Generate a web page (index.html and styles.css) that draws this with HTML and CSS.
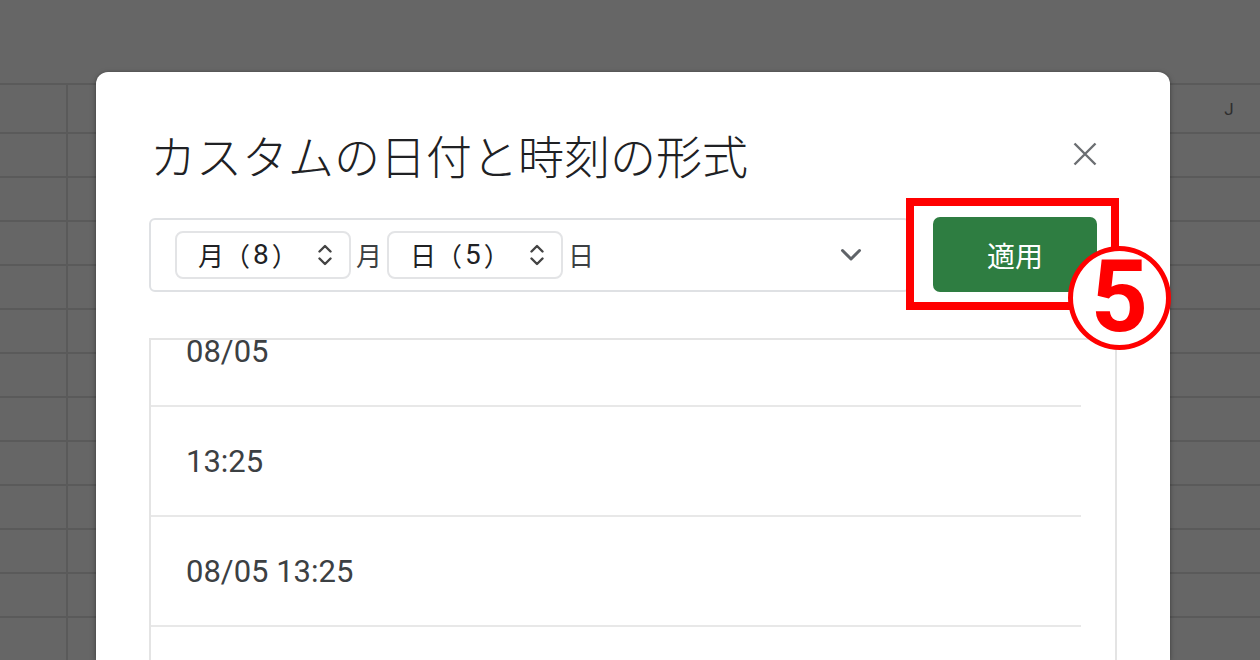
FILE: index.html
```html
<!DOCTYPE html>
<html lang="ja">
<head>
<meta charset="utf-8">
<title>カスタムの日付と時刻の形式</title>
<link rel="stylesheet" href="styles.css">
</head>
<body>
<div class="sheet">
  <div class="toolbar"></div>
  <div class="colhead">
    <div class="rownum"></div>
    <div class="cells"></div>
    <div class="colj">J</div>
  </div>
  <div class="row"><div class="rownum"></div><div class="cells"></div></div>
  <div class="row"><div class="rownum"></div><div class="cells"></div></div>
  <div class="row"><div class="rownum"></div><div class="cells"></div></div>
  <div class="row"><div class="rownum"></div><div class="cells"></div></div>
  <div class="row"><div class="rownum"></div><div class="cells"></div></div>
  <div class="row"><div class="rownum"></div><div class="cells"></div></div>
  <div class="row"><div class="rownum"></div><div class="cells"></div></div>
  <div class="row"><div class="rownum"></div><div class="cells"></div></div>
  <div class="row"><div class="rownum"></div><div class="cells"></div></div>
  <div class="row"><div class="rownum"></div><div class="cells"></div></div>
  <div class="row"><div class="rownum"></div><div class="cells"></div></div>
  <div class="row row-last"><div class="rownum"></div><div class="cells"></div></div>
</div>

<div class="dialog">
  <div class="dlg-head">
    <h1 class="title">カスタムの日付と時刻の形式</h1>
    <button class="close" aria-label="閉じる">
      <svg width="24" height="24" viewBox="0 0 24 24"><path d="M1.5 1.5 L22.5 22.5 M22.5 1.5 L1.5 22.5" stroke="#6b6e72" stroke-width="2.4" fill="none"/></svg>
    </button>
  </div>
  <div class="fmt-row">
    <div class="fmt-input">
      <div class="chip"><span class="chip-label">月（<span class="num">8</span>）</span>
        <svg width="16" height="26" viewBox="0 0 16 26"><path d="M2.5 9.5 L8 4 L13.5 9.5 M2.5 16.5 L8 22 L13.5 16.5" stroke="#444" stroke-width="2.4" fill="none" stroke-linecap="round" stroke-linejoin="round"/></svg>
      </div>
      <span class="lit">月</span>
      <div class="chip"><span class="chip-label">日（<span class="num">5</span>）</span>
        <svg width="16" height="26" viewBox="0 0 16 26"><path d="M2.5 9.5 L8 4 L13.5 9.5 M2.5 16.5 L8 22 L13.5 16.5" stroke="#444" stroke-width="2.4" fill="none" stroke-linecap="round" stroke-linejoin="round"/></svg>
      </div>
      <span class="lit">日</span>
      <div class="spacer"></div>
      <svg class="dd" width="22" height="14" viewBox="0 0 22 14"><path d="M2.5 2.5 L11 11 L19.5 2.5" stroke="#5f6368" stroke-width="3" fill="none" stroke-linecap="round" stroke-linejoin="round"/></svg>
    </div>
    <button class="apply">適用</button>
  </div>
  <div class="list">
    <div class="item item-first">08/05</div>
    <div class="item">13:25</div>
    <div class="item">08/05 13:25</div>
    <div class="item item-last"></div>
  </div>
</div>

<div class="annot-box"></div>
<div class="annot-num">5</div>
</body>
</html>
```

FILE: styles.css
```css
* { box-sizing: border-box; }
html, body { margin: 0; padding: 0; }
body {
  width: 1260px;
  height: 660px;
  overflow: hidden;
  background: #666666;
  position: relative;
  font-family: "Roboto", "Noto Sans CJK JP", sans-serif;
}

/* background spreadsheet */
.sheet { display: flex; flex-direction: column; height: 660px; }
.toolbar { height: 83px; flex-shrink: 0; }
.colhead {
  display: flex;
  flex-shrink: 0;
  height: 51px;
  border-top: 2px solid #5a5a5a;
  border-bottom: 2px solid #5a5a5a;
}
.row {
  display: flex;
  flex-shrink: 0;
  height: 44px;
  border-bottom: 2px solid #5a5a5a;
}
.row-last {
  flex: 1;
  height: auto;
  border-bottom: 0;
}
.rownum { width: 68px; border-right: 2px solid #5a5a5a; }
.cells { flex: 1; }
.colj {
  width: 62px;
  display: flex;
  align-items: center;
  justify-content: center;
  color: #2e2e2e;
  font-size: 17px;
}

/* dialog */
.dialog {
  position: absolute;
  left: 96px;
  top: 72px;
  width: 1074px;
  height: 588px;
  background: #ffffff;
  border-radius: 12px 12px 0 0;
  box-shadow: 0 2px 6px rgba(0,0,0,0.25), 0 0 3px rgba(0,0,0,0.2);
  padding: 50px 53px 0 53px;
  display: flex;
  flex-direction: column;
}
.dlg-head {
  flex-shrink: 0;
  height: 64px;
  display: flex;
  align-items: center;
  justify-content: space-between;
  padding-right: 20px;
}
.title {
  margin: 0;
  font-family: "Noto Sans CJK JP", sans-serif;
  font-weight: 300;
  font-size: 46px;
  line-height: 1;
  color: #202124;
  padding-left: 1px;
}
.close {
  border: 0;
  background: none;
  padding: 0;
  width: 24px;
  height: 24px;
  display: flex;
}

.fmt-row {
  flex-shrink: 0;
  margin-top: 31px;
  display: flex;
  align-items: center;
  padding-right: 20px;
}
.fmt-input {
  width: 761px;
  height: 74px;
  border: 2px solid #dfe1e4;
  border-radius: 6px;
  display: flex;
  align-items: center;
  padding-left: 24px;
  padding-right: 46px;
}
.chip {
  width: 176px;
  height: 48px;
  border: 2px solid #e3e4e6;
  border-radius: 8px;
  display: flex;
  align-items: center;
  justify-content: space-between;
  padding-left: 21px;
  padding-right: 16px;
  font-size: 26px;
  color: #202124;
}
.chip-label {
  line-height: 1;
  font-family: "Noto Sans CJK JP", sans-serif;
  display: flex;
  align-items: center;
}
.num {
  font-family: "Roboto", sans-serif;
  font-size: 28px;
  margin: 0 3px;
}
.lit {
  margin: 0 5px;
  font-size: 26px;
  color: #3c4043;
  font-family: "Noto Sans CJK JP", sans-serif;
  line-height: 1;
}
.spacer { flex: 1; }
.dd { display: block; }

.apply {
  margin-left: 23px;
  width: 164px;
  height: 75px;
  border: 0;
  border-radius: 7px;
  background: #2e7d41;
  color: #ffffff;
  font-family: "Noto Sans CJK JP", sans-serif;
  font-size: 28px;
  font-weight: 400;
}

.list {
  margin-top: 46px;
  flex: 1;
  min-height: 0;
  border: 2px solid #e4e4e4;
  border-bottom: 0;
  padding-right: 34px;
  display: flex;
  flex-direction: column;
}
.item {
  flex-shrink: 0;
  height: 110px;
  border-bottom: 2px solid #e8e8e8;
  display: flex;
  align-items: center;
  padding-left: 35px;
  font-family: "Roboto", sans-serif;
  font-size: 31px;
  color: #3c4043;
}
.item-first {
  height: 67px;
  align-items: flex-start;
  line-height: 24px;
}
.item-last {
  height: auto;
  flex: 1;
  border-bottom: 0;
}

/* annotation overlay */
.annot-box {
  position: absolute;
  left: 906px;
  top: 198px;
  width: 213px;
  height: 112px;
  border: 8px solid #ff0000;
}
.annot-num {
  position: absolute;
  left: 1068px;
  top: 246px;
  width: 103px;
  height: 104px;
  border-radius: 50%;
  border: 5px solid #ff0000;
  background: #ffffff;
  color: #ff0000;
  font-family: "Roboto", sans-serif;
  font-weight: 700;
  font-size: 100px;
  line-height: 1;
  display: flex;
  align-items: center;
  justify-content: center;
  padding-bottom: 2px;
}
```
